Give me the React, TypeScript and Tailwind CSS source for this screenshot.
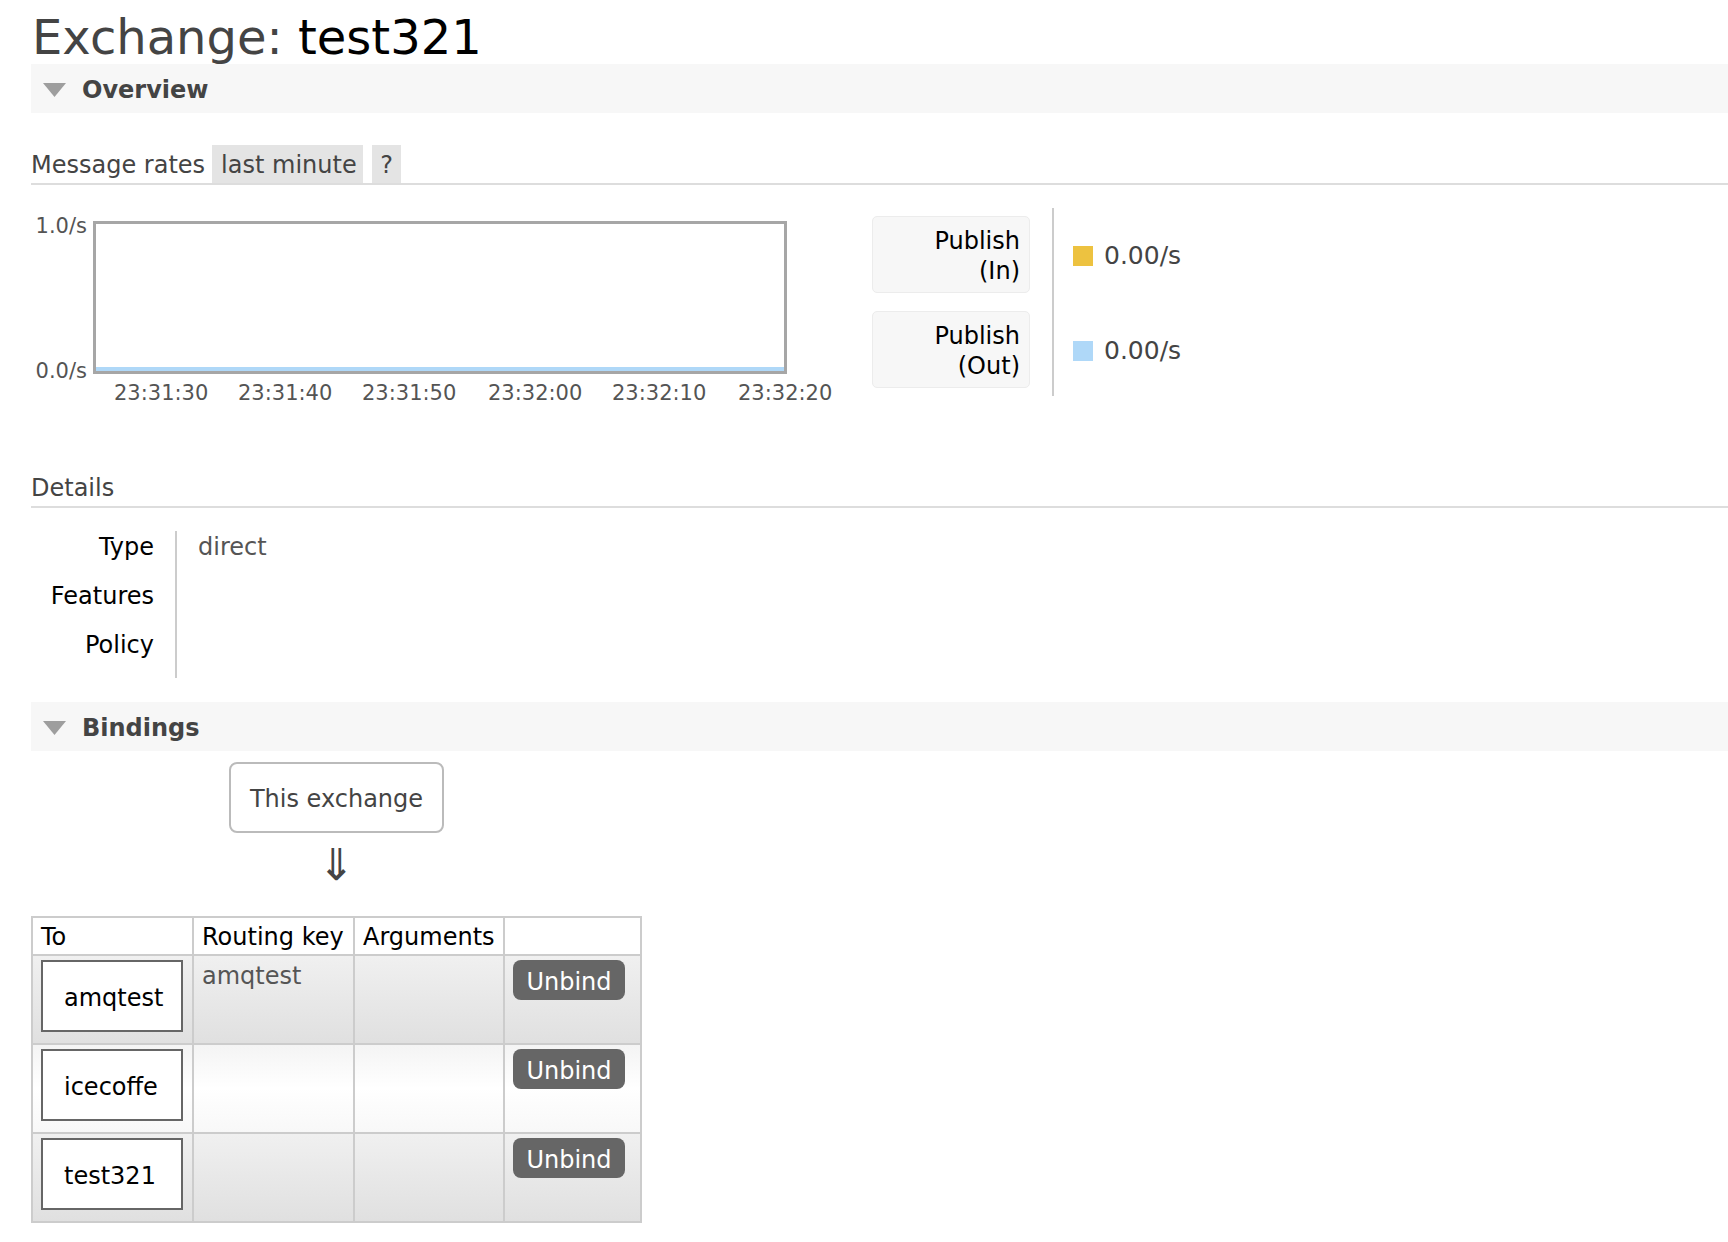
import React from "react";

function Triangle() {
  return (
    <svg width="23" height="14" viewBox="0 0 23 14" className="shrink-0">
      <polygon points="0,0 23,0 11.5,14" fill="#9e9e9e" />
    </svg>
  );
}

function SectionBar({ title }: { title: string }) {
  return (
    <div className="flex h-[49px] items-center gap-[16px] bg-[#f7f7f7] pl-[12px] pt-[2px]">
      <Triangle />
      <span className="text-[24px] font-bold leading-[24px] text-[#444]">{title}</span>
    </div>
  );
}

const ticks = [
  { label: "23:31:30", left: 83 },
  { label: "23:31:40", left: 207 },
  { label: "23:31:50", left: 331 },
  { label: "23:32:00", left: 457 },
  { label: "23:32:10", left: 581 },
  { label: "23:32:20", left: 707 },
];

const bindings = [
  { to: "amqtest", key: "amqtest", alt: 1 },
  { to: "icecoffe", key: "", alt: 2 },
  { to: "test321", key: "", alt: 1 },
];

export default function App() {
  return (
    <div className="min-h-[1242px] bg-white pl-[31px] font-['DejaVu_Sans',sans-serif] text-[#444]">
      {/* Title */}
      <h1 className="pl-[1px] pt-[13px] text-[48px] font-normal leading-[48px] text-[#444]">
        Exchange: <span className="text-black">test321</span>
      </h1>

      <div className="mt-[3px]">
        <SectionBar title="Overview" />
      </div>

      {/* Message rates header */}
      <div className="mt-[32px] flex h-[40px] border-b-2 border-[#ddd] text-[24px] leading-[40px] text-[#444]">
        <span className="h-[38px]">Message rates</span>
        <span className="ml-[7px] h-[38px] w-[151px] bg-[#e4e4e4] pl-[9px]">last minute</span>
        <span className="ml-[9px] h-[38px] w-[29px] bg-[#e4e4e4] text-center">?</span>
      </div>

      {/* Chart + legend */}
      <div className="mt-[23px] flex h-[200px]">
        <div className="relative h-[200px] w-[841px] shrink-0">
          <div className="absolute left-0 top-[8px] w-[56px] text-right text-[21px] leading-[20px] text-[#545454]">1.0/s</div>
          <div className="absolute left-0 top-[153px] w-[56px] text-right text-[21px] leading-[20px] text-[#545454]">0.0/s</div>
          <div className="absolute left-[62px] top-[13px] h-[153px] w-[694px] border-[3px] border-[#a6a6a6] bg-white">
            <div className="absolute bottom-0 left-0 right-0 h-[4px] bg-[#afd8f8]" />
          </div>
          {ticks.map((t) => (
            <div
              key={t.label}
              className="absolute top-[175px] text-[21px] leading-[20px] text-[#545454]"
              style={{ left: t.left }}
            >
              {t.label}
            </div>
          ))}
        </div>

        <div className="flex h-[188px]">
          <div className="flex flex-col gap-[18px] py-[8px] pr-[22px]">
            <div className="h-[77px] w-[158px] rounded-[5px] border border-[#ececec] bg-[#f7f7f7] pr-[9px] pt-[9px] text-right text-[24px] leading-[30px] text-black">
              Publish
              <br />
              (In)
            </div>
            <div className="h-[77px] w-[158px] rounded-[5px] border border-[#ececec] bg-[#f7f7f7] pr-[9px] pt-[9px] text-right text-[24px] leading-[30px] text-black">
              Publish
              <br />
              (Out)
            </div>
          </div>
          <div className="w-[2px] bg-[#ccc]" />
          <div className="flex flex-col gap-[18px] py-[8px] pl-[19px]">
            <div className="flex h-[77px] items-center gap-[11px] pt-[2px]">
              <span className="h-[20px] w-[20px] bg-[#edc240]" />
              <span className="text-[25px] leading-[24px] text-[#444]">0.00/s</span>
            </div>
            <div className="flex h-[77px] items-center gap-[11px] pt-[2px]">
              <span className="h-[20px] w-[20px] bg-[#afd8f8]" />
              <span className="text-[25px] leading-[24px] text-[#444]">0.00/s</span>
            </div>
          </div>
        </div>
      </div>

      {/* Details */}
      <div className="mt-[60px] h-[40px] border-b-2 border-[#ddd] text-[24px] leading-[40px] text-[#444]">
        Details
      </div>
      <div className="mt-[23px] flex text-[24px] leading-[30px]">
        <div className="flex w-[144px] flex-col pr-[21px] text-right text-black">
          <div className="h-[49px] pt-[1px]">Type</div>
          <div className="h-[49px] pt-[1px]">Features</div>
          <div className="h-[49px] pt-[1px]">Policy</div>
        </div>
        <div className="w-[2px] bg-[#ccc]" />
        <div className="flex flex-col pl-[21px] text-[#555]">
          <div className="h-[49px] pt-[1px]">direct</div>
          <div className="h-[49px]" />
          <div className="h-[49px]" />
        </div>
      </div>

      <div className="mt-[24px]">
        <SectionBar title="Bindings" />
      </div>

      {/* Bindings */}
      <div className="flex w-fit flex-col items-center">
        <div className="mt-[11px] flex h-[71px] items-center rounded-[8px] border-2 border-[#bbb] px-[19px] pt-[2px] text-[24px] leading-[30px] text-[#444]">
          This exchange
        </div>
        <div className="mt-[12px] flex h-[40px] items-center justify-center text-[44px] leading-[40px] text-[#444]">⇓</div>

        <div className="mt-[31px] grid grid-cols-[159px_159px_148px_135px] gap-[2px] bg-[#ccc] p-[2px] text-[24px]">
          <div className="h-[36px] bg-white px-[8px] pt-[1px] leading-[36px] text-black">To</div>
          <div className="h-[36px] bg-white px-[8px] pt-[1px] leading-[36px] text-black">Routing key</div>
          <div className="h-[36px] bg-white px-[8px] pt-[1px] leading-[36px] text-black">Arguments</div>
          <div className="h-[36px] bg-white" />
          {bindings.map((b) => {
            const bg =
              b.alt === 1
                ? "bg-linear-to-b from-[#f0f0f0] to-[#e0e0e0]"
                : "bg-linear-to-b from-[#f4f4f4] via-[#ffffff] to-[#f8f8f8]";
            return (
              <React.Fragment key={b.to}>
                <div className={`h-[87px] px-[8px] pt-[4px] ${bg}`}>
                  <div className="flex h-[72px] w-[142px] items-center border-2 border-[#666] bg-white pl-[21px] pt-[4px] leading-[30px] text-black">
                    {b.to}
                  </div>
                </div>
                <div className={`h-[87px] px-[8px] pt-[5px] leading-[30px] text-[#555] ${bg}`}>{b.key}</div>
                <div className={`h-[87px] ${bg}`} />
                <div className={`h-[87px] px-[8px] pt-[4px] ${bg}`}>
                  <button className="h-[40px] w-[112px] rounded-[8px] bg-[#666] pt-[4px] text-center text-[24px] leading-[36px] text-white">
                    Unbind
                  </button>
                </div>
              </React.Fragment>
            );
          })}
        </div>
      </div>
    </div>
  );
}
